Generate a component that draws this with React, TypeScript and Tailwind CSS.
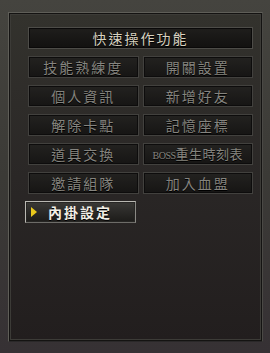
import React from 'react';

const FONT = '"Noto Sans CJK TC", "Noto Sans CJK SC", "Noto Sans", sans-serif';

const menuItems = [
  '技能熟練度',
  '開關設置',
  '個人資訊',
  '新增好友',
  '解除卡點',
  '記憶座標',
  '道具交換',
  'BOSS重生時刻表',
  '邀請組隊',
  '加入血盟',
];

function MenuButton({ label }: { label: string }) {
  // the boss table label has latin letters in a smaller serif face
  const isBoss = label.startsWith('BOSS');
  return (
    <button className="h-[22px] border border-[#42413e] bg-gradient-to-b from-[#232220] to-[#161514] shadow-[inset_0_0_0_1px_#0d0c0c] flex items-center justify-center">
      {isBoss ? (
        <span className="text-[13px] leading-none text-[#85847f] [text-shadow:0_1px_0_#000]">
          <span className="text-[10px] font-['Liberation_Serif',serif] tracking-[-0.5px]">BOSS</span>
          <span className="tracking-[0.5px]">重生時刻表</span>
        </span>
      ) : (
        <span className="text-[14px] leading-none tracking-[2px] text-[#85847f] [text-shadow:0_1px_0_#000]">
          {label}
        </span>
      )}
    </button>
  );
}

export default function App() {
  return (
    <div
      className="w-[270px] h-[353px] bg-gradient-to-b from-[#45443f] via-[#3b3a36] to-[#363134] pt-[12px] pl-[8px] pr-[7px] pb-[11px]"
      style={{ fontFamily: FONT }}
    >
      {/* Outer frame */}
      <div className="h-full border border-[#5f5e58] border-b-[#2a2829] border-r-[#4a4945] bg-[#141312] p-[1px]">
        <div className="h-full border border-[#3c3b37] bg-gradient-to-b from-[#33322d] via-[#2a2726] to-[#221e1e] pl-[17px] pr-[7px] pt-[12px]">
          {/* Title bar */}
          <div className="h-[22px] border border-[#4d4c48] bg-gradient-to-b from-[#1f1e1c] to-[#121110] shadow-[inset_0_0_0_1px_#0a0909] flex items-center justify-center">
            <span className="text-[14px] leading-none tracking-[2px] text-[#d8d2c0] [text-shadow:0_1px_0_#000]">
              快速操作功能
            </span>
          </div>

          {/* Shortcut grid */}
          <div className="grid grid-cols-2 gap-x-[4px] gap-y-[7px] mt-[7px]">
            {menuItems.map((item) => (
              <MenuButton key={item} label={item} />
            ))}
          </div>

          {/* Active entry */}
          <div className="mt-[7px] -ml-[3px] w-[111px] h-[22px] border border-[#b9b8b2] border-b-[#6d6c68] border-r-[#8a8984] bg-gradient-to-b from-[#3a3936] to-[#1c1b19] shadow-[inset_0_0_0_1px_#262523] flex items-center pl-[5px]">
            <svg width="6" height="10" viewBox="0 0 6 10" className="shrink-0">
              <polygon points="0,0 6,5 0,10" fill="#e8c81c" />
            </svg>
            <span className="ml-[11px] text-[14px] font-bold leading-none tracking-[2px] text-[#f2efe6] [text-shadow:0_1px_0_#000]">
              內掛設定
            </span>
          </div>
        </div>
      </div>
    </div>
  );
}
